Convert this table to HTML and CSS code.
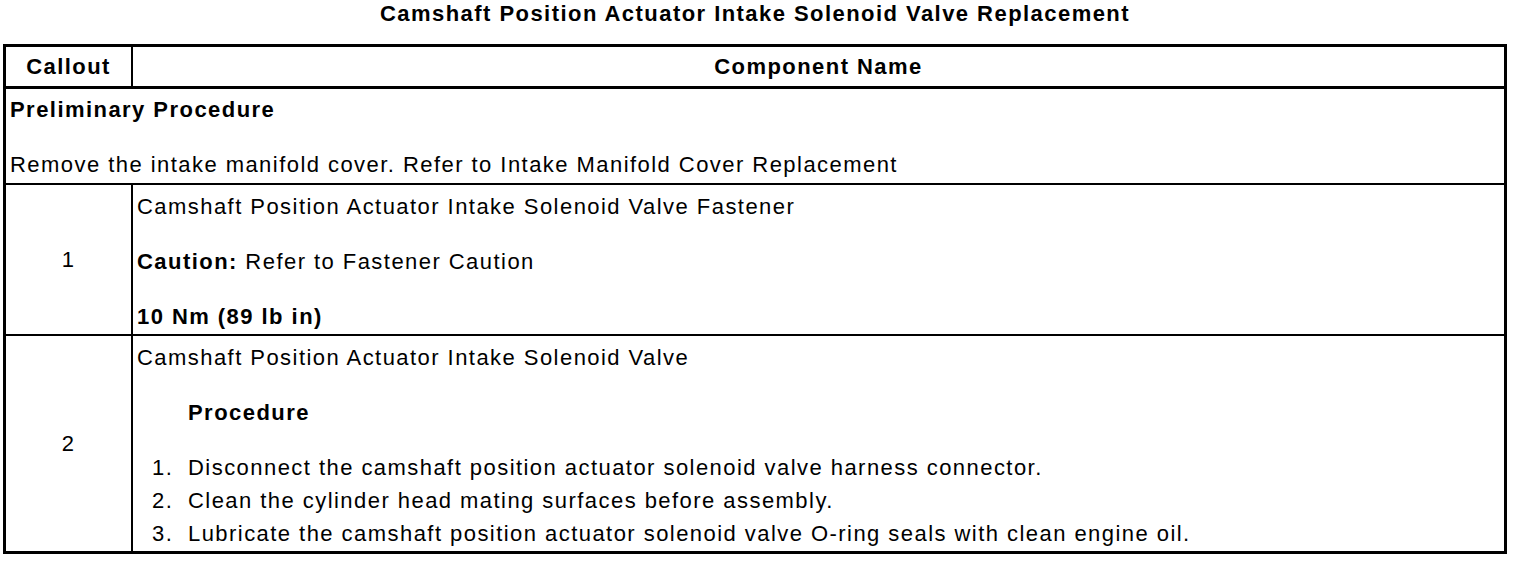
FILE: index.html
```html
<!DOCTYPE html>
<html lang="en">
<head>
<meta charset="utf-8">
<title>Camshaft Position Actuator Intake Solenoid Valve Replacement</title>
<link rel="stylesheet" href="styles.css">
</head>
<body>
<div class="page">
  <h1 class="title">Camshaft Position Actuator Intake Solenoid Valve Replacement</h1>
  <table class="proc">
    <thead>
      <tr>
        <th class="col-callout">Callout</th>
        <th class="col-name">Component Name</th>
      </tr>
    </thead>
    <tbody>
      <tr>
        <td class="cell cell-pre" colspan="2">
          <p class="line strong">Preliminary Procedure</p>
          <p class="line">Remove the intake manifold cover. Refer to Intake Manifold Cover Replacement</p>
        </td>
      </tr>
      <tr>
        <td class="callout">1</td>
        <td class="cell">
          <p class="line">Camshaft Position Actuator Intake Solenoid Valve Fastener</p>
          <p class="line"><strong>Caution:</strong> Refer to Fastener Caution</p>
          <p class="line strong">10 Nm (89 lb in)</p>
        </td>
      </tr>
      <tr>
        <td class="callout">2</td>
        <td class="cell">
          <p class="line">Camshaft Position Actuator Intake Solenoid Valve</p>
          <p class="line strong sub">Procedure</p>
          <ol class="steps">
            <li>Disconnect the camshaft position actuator solenoid valve harness connector.</li>
            <li>Clean the cylinder head mating surfaces before assembly.</li>
            <li>Lubricate the camshaft position actuator solenoid valve O-ring seals with clean engine oil.</li>
          </ol>
        </td>
      </tr>
    </tbody>
  </table>
</div>
</body>
</html>
```

FILE: styles.css
```css
html, body {
  margin: 0;
  padding: 0;
  background: #ffffff;
}

body {
  font-family: "Liberation Sans", Arial, sans-serif;
  font-size: 22px;
  letter-spacing: 1.45px;
  color: #000;
}

.page {
  width: 1504px;
  margin: 0 0 0 3px;
}

.title {
  margin: 0;
  font-size: 22px;
  font-weight: bold;
  line-height: 28px;
  text-align: center;
  padding-bottom: 16px;
}

.proc {
  width: 1504px;
  border-collapse: collapse;
  border: 3px solid #000;
}

.proc th {
  font-weight: bold;
  line-height: 33px;
  padding: 3px 4px;
  text-align: center;
  border-bottom: 3px solid #000;
  border-right: 2px solid #000;
}

.col-callout {
  width: 117px;
}

.proc td {
  border-top: 2px solid #000;
  border-right: 2px solid #000;
  vertical-align: middle;
}

.callout {
  text-align: center;
  line-height: 33px;
}

.cell {
  padding: 5px 4px 1px 4px;
  text-align: left;
}

.cell-pre {
  padding-top: 4px;
  padding-bottom: 2px;
}

.line {
  margin: 0 0 22px 0;
  line-height: 33px;
}

.line:last-child {
  margin-bottom: 0;
}

.strong {
  font-weight: bold;
}

.sub {
  padding-left: 51px;
}

.steps {
  margin: 0;
  padding-left: 15px;
  list-style: none;
  counter-reset: step;
}

.steps li {
  display: flex;
  line-height: 33px;
  counter-increment: step;
}

.steps li::before {
  content: counter(step) ".";
  flex: 0 0 36px;
}
```
